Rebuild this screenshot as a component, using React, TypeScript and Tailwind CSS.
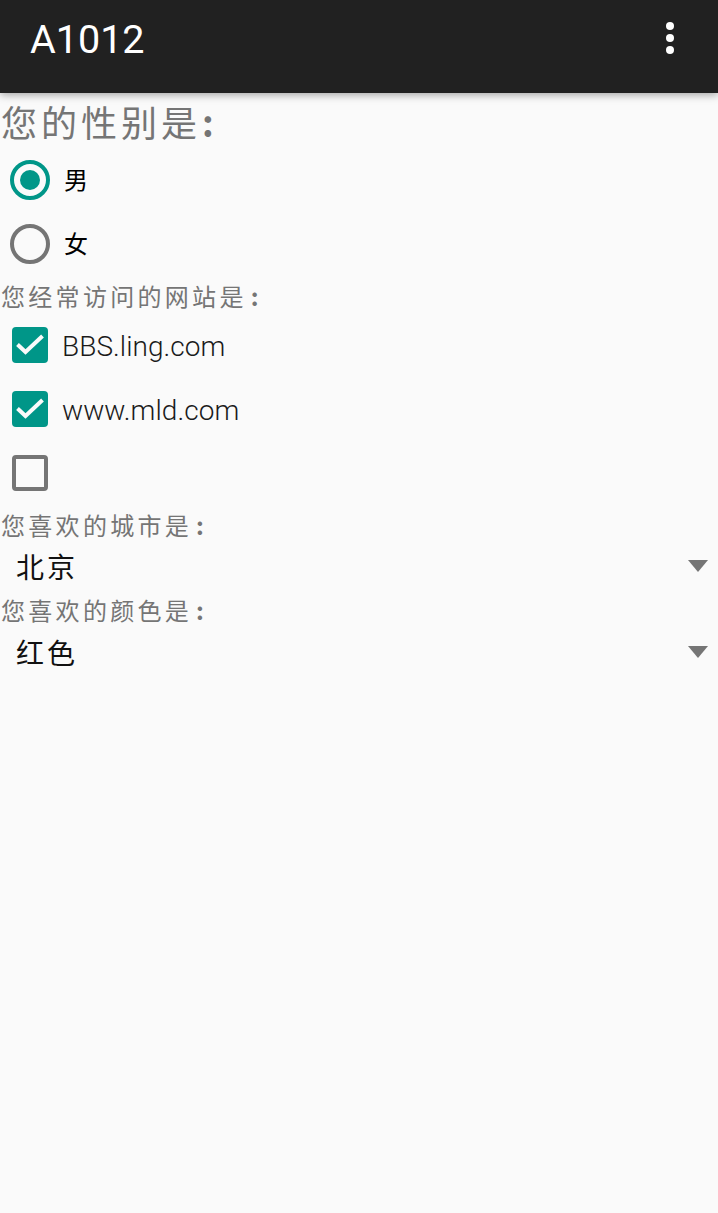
const cjk = "font-['Noto_Sans_CJK_SC',sans-serif]";

function Label({ text, className }: { text: string; className: string }) {
  return (
    <div className={`pl-[1px] flex items-center text-[24px] leading-none tracking-[3.3px] font-normal text-[#757575] ${cjk} ${className}`}>
      {text}
      <span className="ml-[4px] font-bold">:</span>
    </div>
  );
}

function Radio({ checked, label }: { checked?: boolean; label: string }) {
  return (
    <div className="h-[64px] flex items-center pl-[10px]">
      <div className={`w-[40px] h-[40px] rounded-full border-[4px] flex items-center justify-center ${checked ? "border-[#009688]" : "border-[#757575]"}`}>
        {checked && <div className="w-[20px] h-[20px] rounded-full bg-[#009688]" />}
      </div>
      <span className={`ml-[14px] mt-[-2px] text-[24px] leading-none text-black ${cjk}`}>{label}</span>
    </div>
  );
}

function Check({ checked, label }: { checked?: boolean; label?: string }) {
  return (
    <div className="h-[64px] flex items-center pl-[12px]">
      {checked ? (
        <div className="w-[36px] h-[36px] rounded-[4px] bg-[#009688] flex items-center justify-center">
          <svg width="36" height="36" viewBox="0 0 36 36" fill="none">
            <path d="M5.5 17.5 L13.5 25 L30.5 9" stroke="#fafafa" strokeWidth="4" />
          </svg>
        </div>
      ) : (
        <div className="w-[36px] h-[36px] rounded-[4px] border-[4px] border-[#757575]" />
      )}
      {label && <span className="ml-[14px] mt-[4px] text-[28px] leading-none tracking-[0.05px] text-[#1a1a1a] font-['Roboto',sans-serif] font-light">{label}</span>}
    </div>
  );
}

function Spinner({ text }: { text: string }) {
  return (
    <div className="h-[50px] flex items-center justify-between pl-[16px] pr-[10px]">
      <span className={`text-[28px] leading-none tracking-[3px] text-[#111111] ${cjk}`}>{text}</span>
      <svg width="20" height="12" viewBox="0 0 20 12">
        <path d="M0 0 H20 L10 12 Z" fill="#757575" />
      </svg>
    </div>
  );
}

export default function App() {
  return (
    <div className="w-[718px] h-[1213px] bg-[#fafafa] overflow-hidden flex flex-col">
      <header className="h-[93px] shrink-0 bg-[#212121] flex items-center justify-between pl-[30px] pr-[44px] shadow-[0_2px_8px_rgba(0,0,0,0.35)] relative z-10">
        <span className="text-white text-[39.5px] leading-none font-['Roboto',sans-serif] font-normal mt-[-14px]">A1012</span>
        <div className="flex flex-col gap-[4px] mt-[-17px]">
          <div className="w-[8px] h-[8px] rounded-full bg-white" />
          <div className="w-[8px] h-[8px] rounded-full bg-white" />
          <div className="w-[8px] h-[8px] rounded-full bg-white" />
        </div>
      </header>
      <main className="flex flex-col">
        <div className={`h-[55px] pl-[1px] flex items-center text-[36px] leading-none tracking-[4px] font-normal text-[#757575] ${cjk}`}>
          您的性别是
          <span className="ml-[1px] font-bold">:</span>
        </div>
        <Radio checked label="男" />
        <Radio label="女" />
        <Label text="您经常访问的网站是" className="h-[37px] pt-[2px]" />
        <Check checked label="BBS.ling.com" />
        <Check checked label="www.mld.com" />
        <Check />
        <Label text="您喜欢的城市是" className="h-[36px] pt-[4px]" />
        <Spinner text="北京" />
        <Label text="您喜欢的颜色是" className="h-[36px] pt-[2px]" />
        <Spinner text="红色" />
      </main>
    </div>
  );
}
